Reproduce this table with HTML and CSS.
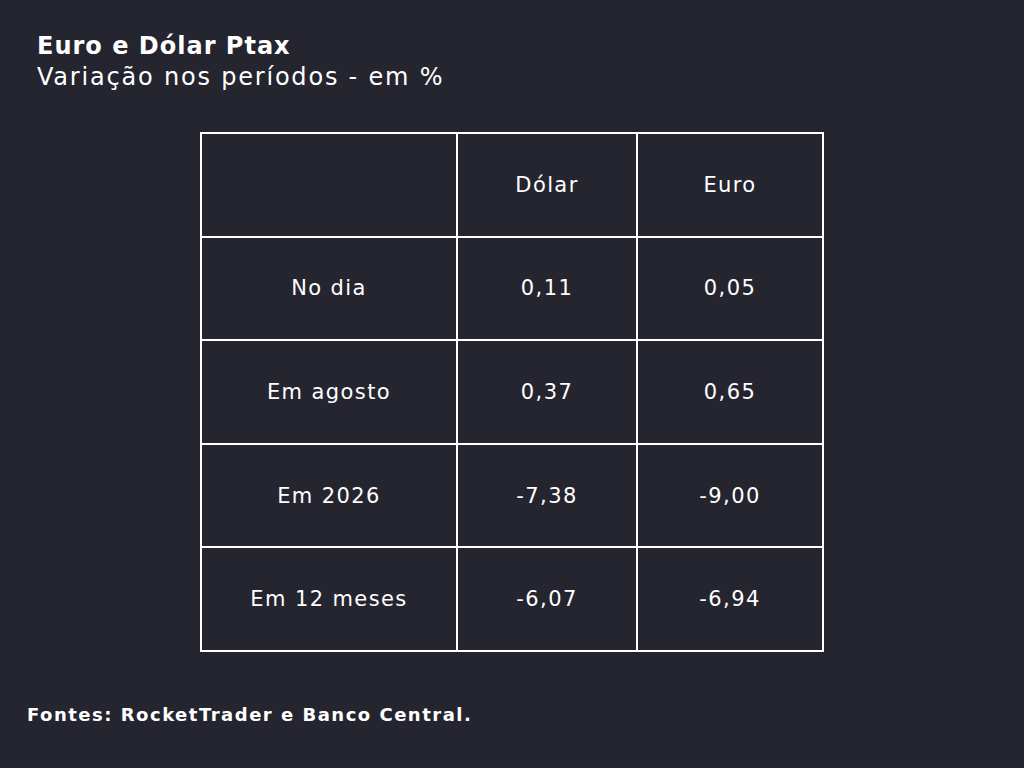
FILE: index.html
```html
<!DOCTYPE html>
<html lang="pt">
<head>
<meta charset="utf-8">
<link rel="stylesheet" href="styles.css">
</head>
<body>
<div class="page">
  <header class="head">
    <h1 class="title">Euro e Dólar Ptax</h1>
    <p class="subtitle">Variação nos períodos - em %</p>
  </header>
  <div class="table-wrap">
    <table class="data">
      <tr><td class="c1"></td><td class="c2">Dólar</td><td class="c3">Euro</td></tr>
      <tr><td>No dia</td><td>0,11</td><td>0,05</td></tr>
      <tr><td>Em agosto</td><td>0,37</td><td>0,65</td></tr>
      <tr><td>Em 2026</td><td>-7,38</td><td>-9,00</td></tr>
      <tr><td>Em 12 meses</td><td>-6,07</td><td>-6,94</td></tr>
    </table>
  </div>
  <p class="source">Fontes: RocketTrader e Banco Central.</p>
</div>
</body>
</html>
```
FILE: styles.css
```css
html, body {
  margin: 0;
  padding: 0;
  background: #252530;
}
.page {
  width: 1024px;
  height: 768px;
  box-sizing: border-box;
  padding: 31px 0 0 0;
  font-family: "DejaVu Sans", sans-serif;
  color: #ffffff;
  display: flex;
  flex-direction: column;
}
.head {
  padding-left: 37px;
}
.title {
  margin: 0;
  font-size: 24px;
  font-weight: 700;
  line-height: 31px;
  letter-spacing: 1px;
}
.subtitle {
  margin: 0;
  font-size: 24px;
  font-weight: 400;
  line-height: 31px;
  letter-spacing: 1.8px;
}
.table-wrap {
  padding-left: 200px;
  margin-top: 39px;
}
.data {
  border-collapse: collapse;
  border: 2px solid #ffffff;
}
.data td {
  border: 2px solid #ffffff;
  height: 101.6px;
  padding: 0;
  text-align: center;
  vertical-align: middle;
  font-size: 21px;
  font-weight: 400;
  letter-spacing: 1.4px;
}
.c1 { width: 254px; }
.c2 { width: 178px; }
.c3 { width: 184px; }
.source {
  margin: 52px 0 0 27px;
  font-size: 18px;
  font-weight: 700;
  letter-spacing: 1.5px;
}
```
